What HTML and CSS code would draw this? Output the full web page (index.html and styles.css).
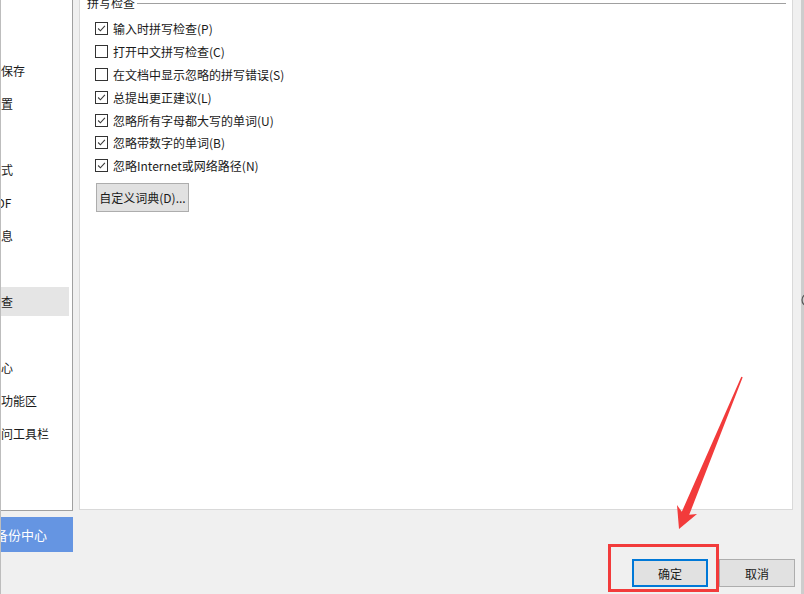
FILE: index.html
```html
<!DOCTYPE html>
<html lang="zh-CN">
<head>
<meta charset="utf-8">
<title>选项 - 拼写检查</title>
<link rel="stylesheet" href="styles.css">
</head>
<body>
<div class="app">
  <div class="main">
    <div class="top">
      <ul class="sidebar">
        <li class="nav">视图</li>
        <li class="nav">编辑</li>
        <li class="nav">常规与保存</li>
        <li class="nav">文件位置</li>
        <li class="nav">修订</li>
        <li class="nav">中文版式</li>
        <li class="nav">输出PDF</li>
        <li class="nav">用户信息</li>
        <li class="nav">打印</li>
        <li class="nav active"><span class="nav-bg">拼写检查</span></li>
        <li class="nav">安全性</li>
        <li class="nav">信任中心</li>
        <li class="nav">自定义功能区</li>
        <li class="nav">快速访问工具栏</li>
      </ul>
      <div class="content">
        <div class="group-title">
          <span class="group-label">拼写检查</span>
          <span class="group-line"></span>
        </div>
        <ul class="options">
          <li class="opt"><span class="cb checked"><svg viewBox="0 0 13 13" width="13" height="13"><polyline points="2.5,6.5 5.2,9.2 10.5,3.3"/></svg></span><span>输入时拼写检查(P)</span></li>
          <li class="opt"><span class="cb"></span><span>打开中文拼写检查(C)</span></li>
          <li class="opt"><span class="cb"></span><span>在文档中显示忽略的拼写错误(S)</span></li>
          <li class="opt"><span class="cb checked"><svg viewBox="0 0 13 13" width="13" height="13"><polyline points="2.5,6.5 5.2,9.2 10.5,3.3"/></svg></span><span>总提出更正建议(L)</span></li>
          <li class="opt"><span class="cb checked"><svg viewBox="0 0 13 13" width="13" height="13"><polyline points="2.5,6.5 5.2,9.2 10.5,3.3"/></svg></span><span>忽略所有字母都大写的单词(U)</span></li>
          <li class="opt"><span class="cb checked"><svg viewBox="0 0 13 13" width="13" height="13"><polyline points="2.5,6.5 5.2,9.2 10.5,3.3"/></svg></span><span>忽略带数字的单词(B)</span></li>
          <li class="opt"><span class="cb checked"><svg viewBox="0 0 13 13" width="13" height="13"><polyline points="2.5,6.5 5.2,9.2 10.5,3.3"/></svg></span><span>忽略Internet或网络路径(N)</span></li>
        </ul>
        <button class="btn dict">自定义词典(D)...</button>
      </div>
    </div>
    <div class="bottom">
      <div class="backup">备份中心</div>
      <div class="actions">
        <button class="btn ok">确定</button>
        <button class="btn cancel">取消</button>
      </div>
    </div>
  </div>
  <div class="edge">
    <svg width="3" height="594" viewBox="0 0 3 594"><circle cx="7" cy="300" r="6" fill="none" stroke="#555" stroke-width="1.2"/></svg>
  </div>

  <div class="highlight-box"></div>
  <svg class="arrow" width="804" height="594" viewBox="0 0 804 594">
    <polygon points="741.3,376.7 681.8,511.8 677,505 679,529 697,514 689.2,514.8 742.7,377.3" fill="#f23b3b"/>
  </svg>
</div>
</body>
</html>
```
FILE: styles.css
```css
* { box-sizing: border-box; }
html, body { margin: 0; padding: 0; }
body {
  width: 804px;
  height: 594px;
  overflow: hidden;
  background: #f0f0f0;
  font-family: "Noto Sans CJK SC", "Microsoft YaHei", sans-serif;
  font-size: 12px;
  color: #1a1a1a;
}
ul { list-style: none; margin: 0; padding: 0; }

.app {
  position: relative;
  display: flex;
  width: 804px;
  height: 594px;
}
.main {
  width: 801px;
  height: 594px;
  border-left: 1px solid #bdbdbd;
  display: flex;
  flex-direction: column;
}
.top {
  display: flex;
  align-items: flex-start;
  height: 511px;
}

/* sidebar */
.sidebar {
  width: 72px;
  height: 511px;
  background: #fff;
  border-right: 1px solid #a0a0a0;
  border-bottom: 1px solid #a0a0a0;
  overflow: hidden;
  padding-top: 0;
}
.sidebar .nav:first-child { margin-top: -12px; }
.nav {
  height: 33px;
  line-height: 33px;
  white-space: nowrap;
  text-indent: -36px;
  color: #1a1a1a;
}
.nav.active {
  padding: 2px 3px 2px 0;
}
.nav-bg {
  display: block;
  height: 29px;
  line-height: 29px;
  background: #e5e5e5;
}

/* content panel */
.content {
  margin-left: 6px;
  width: 714px;
  height: 510px;
  background: #fff;
  border: 1px solid #d9d9d9;
  border-top: none;
  padding: 0 6px 0 7px;
}
.group-title {
  display: flex;
  align-items: center;
  height: 14px;
  margin-top: -4px;
}
.group-label {
  white-space: nowrap;
  line-height: 14px;
  padding-right: 2px;
}
.group-line {
  flex: 1;
  height: 1px;
  background: #a0a0a0;
}
.options {
  margin-top: 7.5px;
  padding-left: 8px;
}
.opt {
  display: flex;
  align-items: center;
  height: 22.8px;
  gap: 5px;
  white-space: nowrap;
}
.cb {
  width: 13px;
  height: 13px;
  border: 1px solid #333;
  background: #fff;
  display: flex;
  align-items: center;
  justify-content: center;
  flex: none;
}
.cb svg {
  width: 11px;
  height: 11px;
  fill: none;
  stroke: #3a3a3a;
  stroke-width: 1.3;
}

.btn {
  font-family: inherit;
  font-size: 12px;
  color: #1a1a1a;
  background: #e1e1e1;
  border: 1px solid #adadad;
  padding: 0;
  margin: 0;
}
.dict {
  display: block;
  margin: 6px 0 0 9px;
  width: 93px;
  height: 29px;
}

/* bottom */
.bottom {
  display: flex;
  align-items: flex-start;
  flex: 1;
}
.backup {
  margin-top: 6px;
  width: 72px;
  height: 35px;
  line-height: 35px;
  background: #6595e2;
  color: #fff;
  font-size: 13px;
  white-space: nowrap;
  overflow: hidden;
  text-indent: -6px;
}
.actions {
  margin-left: auto;
  margin-right: 6px;
  margin-top: 48px;
  display: flex;
  gap: 11px;
}
.ok, .cancel {
  width: 76px;
  height: 28px;
}
.ok {
  border: 2px solid #0078d7;
}

.edge {
  width: 3px;
  height: 594px;
  background: #cdcdcd;
  overflow: hidden;
}
.edge svg { display: block; }

/* annotations */
.highlight-box {
  position: absolute;
  left: 608px;
  top: 544px;
  width: 111px;
  height: 48px;
  border: 3px solid #f23b3b;
}
.arrow {
  position: absolute;
  left: 0;
  top: 0;
  pointer-events: none;
}
```
